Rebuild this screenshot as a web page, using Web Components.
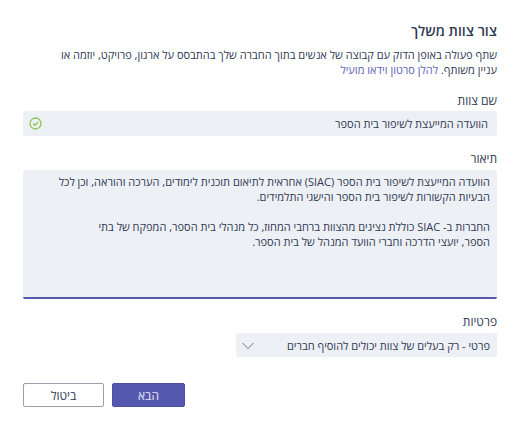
<!DOCTYPE html>
<html lang="he" dir="rtl">
<head>
<meta charset="utf-8">
<title>צור צוות משלך</title>
<style>
  body {
    margin: 0;
    background: #fff;
    color: #2f3a54;
    font-family: "Open Sans", "Noto Sans", "Liberation Sans", sans-serif;
    font-size: 12px;
    line-height: 15px;
  }
</style>
</head>
<body>
<team-dialog heading="צור צוות משלך">
  <span slot="intro">שתף פעולה באופן הדוק עם קבוצה של אנשים בתוך החברה שלך בהתבסס על ארגון, פרויקט, יוזמה או עניין משותף.</span>
  <team-link slot="intro" href="#video">להלן סרטון וידאו מועיל</team-link>
  <team-name label="שם צוות" value="הוועדה המייעצת לשיפור בית הספר"></team-name>
  <team-description label="תיאור">הוועדה המייעצת לשיפור בית הספר (SIAC) אחראית לתיאום תוכנית לימודים, הערכה והוראה, וכן לכל הבעיות הקשורות לשיפור בית הספר והישגי התלמידים.

החברות ב- SIAC כוללת נציגים מהצוות ברחבי המחוז, כל מנהלי בית הספר, המפקח של בתי
הספר, יועצי הדרכה וחברי הוועד המנהל של בית הספר.</team-description>
  <team-privacy label="פרטיות" value="פרטי - רק בעלים של צוות יכולים להוסיף חברים"></team-privacy>
  <team-button slot="actions" primary>הבא</team-button>
  <team-button slot="actions">ביטול</team-button>
</team-dialog>

<script>
const fieldStyles = /*html*/`
  <style>
    :host { display: block; }
    label {
      display: block;
      margin-bottom: 3px;
    }
    input, textarea, select {
      box-sizing: border-box;
      display: block;
      width: 100%;
      margin: 0;
      border: 0;
      border-radius: 2px;
      outline: 0;
      background: #edf0f5;
      color: inherit;
      font: inherit;
      font-size: 11px;
    }
  </style>`;

class TeamDialog extends HTMLElement {
  connectedCallback() {
    this.attachShadow({ mode: 'open' }).innerHTML = /*html*/`
      <style>
        :host { display: block; padding: 21px 23px; }
        h1 {
          margin: 0 0 6px;
          font-size: 14px;
          line-height: 20px;
          font-weight: 600;
        }
        p {
          margin: 0 0 16px;
          padding-left: 24px;
          font-size: 11px;
        }
        .fields {
          display: flex;
          flex-direction: column;
          gap: 15px;
        }
        .actions {
          display: flex;
          justify-content: flex-end;
          gap: 8px;
          margin-top: 26px;
        }
      </style>
      <h1></h1>
      <p><slot name="intro"></slot></p>
      <div class="fields"><slot></slot></div>
      <div class="actions"><slot name="actions"></slot></div>`;
    this.shadowRoot.querySelector('h1').textContent = this.getAttribute('heading');
  }
}

class TeamLink extends HTMLElement {
  connectedCallback() {
    this.attachShadow({ mode: 'open' }).innerHTML = /*html*/`
      <style>
        :host { display: inline; }
        a { color: #6264b7; text-decoration: none; }
      </style>
      <a><slot></slot></a>`;
    this.shadowRoot.querySelector('a').href = this.getAttribute('href');
  }
}

class TeamName extends HTMLElement {
  connectedCallback() {
    this.attachShadow({ mode: 'open' }).innerHTML = /*html*/`
      ${fieldStyles}
      <style>
        .box { position: relative; }
        input { height: 25px; padding: 0 9px 0 28px; }
        svg { position: absolute; left: 6px; top: 6px; }
      </style>
      <label for="name"></label>
      <div class="box">
        <input id="name" type="text">
        <svg width="13" height="13" viewBox="0 0 13 13" fill="none" stroke="#92c353" aria-hidden="true">
          <circle cx="6.5" cy="6.5" r="5.5" stroke-width="1.3"/>
          <path d="M4 6.6 5.8 8.3 9.2 4.9" stroke-width="1.4"/>
        </svg>
      </div>`;
    this.shadowRoot.querySelector('label').textContent = this.getAttribute('label');
    this.shadowRoot.querySelector('input').value = this.getAttribute('value');
  }
}

class TeamDescription extends HTMLElement {
  connectedCallback() {
    this.attachShadow({ mode: 'open' }).innerHTML = /*html*/`
      ${fieldStyles}
      <style>
        label { margin-bottom: 4px; }
        textarea {
          height: 129px;
          padding: 4px 7px 4px 24px;
          border-bottom: 2px solid #5558af;
          resize: none;
        }
      </style>
      <label for="description"></label>
      <textarea id="description"></textarea>`;
    this.shadowRoot.querySelector('label').textContent = this.getAttribute('label');
    this.shadowRoot.querySelector('textarea').value = this.textContent;
  }
}

class TeamPrivacy extends HTMLElement {
  connectedCallback() {
    this.attachShadow({ mode: 'open' }).innerHTML = /*html*/`
      ${fieldStyles}
      <style>
        label { margin-bottom: 4px; }
        .box { position: relative; width: 55%; }
        select { height: 24px; padding: 0 7px 0 28px; appearance: none; }
        svg { position: absolute; left: 6px; top: 9px; pointer-events: none; }
      </style>
      <label for="privacy"></label>
      <div class="box">
        <select id="privacy"><option></option></select>
        <svg width="12" height="8" viewBox="0 0 12 8" fill="none" stroke="#6f7689" aria-hidden="true">
          <path d="M.6 1 6 6.6 11.4 1"/>
        </svg>
      </div>`;
    this.shadowRoot.querySelector('label').textContent = this.getAttribute('label');
    this.shadowRoot.querySelector('option').textContent = this.getAttribute('value');
  }
}

class TeamButton extends HTMLElement {
  connectedCallback() {
    this.attachShadow({ mode: 'open' }).innerHTML = /*html*/`
      <style>
        :host { display: block; }
        button {
          box-sizing: border-box;
          min-width: 81px;
          height: 24px;
          padding: 0 8px;
          border: 1px solid #9a9fab;
          border-radius: 2px;
          background: #fff;
          color: inherit;
          font: inherit;
        }
        :host([primary]) button {
          min-width: 73px;
          border-color: #4b4ea8;
          background: #5558af;
          color: #e4e5f4;
        }
      </style>
      <button type="button"><slot></slot></button>`;
  }
}

customElements.define('team-dialog', TeamDialog);
customElements.define('team-link', TeamLink);
customElements.define('team-name', TeamName);
customElements.define('team-description', TeamDescription);
customElements.define('team-privacy', TeamPrivacy);
customElements.define('team-button', TeamButton);
</script>
</body>
</html>
